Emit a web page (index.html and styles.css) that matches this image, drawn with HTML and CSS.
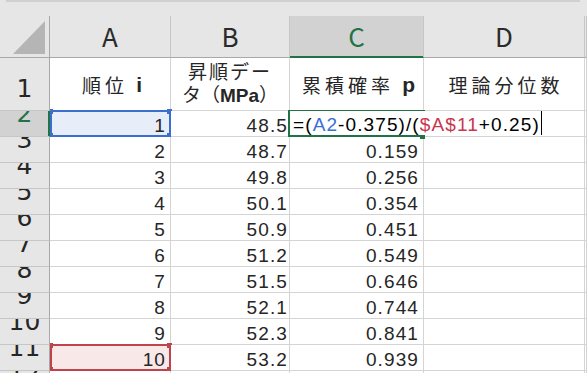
FILE: index.html
```html
<!DOCTYPE html>
<html>
<head>
    <title>Sheet</title>
    <link rel="stylesheet" href="styles.css">
</head>
<body>
    <div class="topbar"><div class="topbar-line"></div></div>

    <div class="sheet">
        <!-- column headers -->
        <div class="corner"><div class="corner-tri"></div></div>
        <div class="col-head">A</div>
        <div class="col-head">B</div>
        <div class="col-head active">C</div>
        <div class="col-head">D</div>
        <div class="col-head"></div>

        <!-- row 1: titles -->
        <div class="row-head first">1</div>
        <div class="cell title">順位 <b>i</b></div>
        <div class="cell title wrap"><span class="l1">昇順デー</span><span class="l2">タ（<b>MPa</b>）</span></div>
        <div class="cell title">累積確率 <b>p</b></div>
        <div class="cell title">理論分位数</div>
        <div class="cell"></div>

        <!-- row 2: editing -->
        <div class="row-head active"><span>2</span></div>
        <div class="cell a ref-blue">1
            <div class="ref-box blue">
                <i class="h tl"></i><i class="h tr"></i><i class="h bl"></i><i class="h br"></i>
            </div>
        </div>
        <div class="cell b">48.5</div>
        <div class="cell c editing">
            <div class="edit-box"><i class="fill-handle"></i></div>
            <div class="formula">=(<span class="f-blue">A2</span>-0.375)/(<span class="f-red">$A$11</span>+0.25)</div>
        </div>
        <div class="cell d"></div>
        <div class="cell"></div>

        <div class="row-head"><span>3</span></div>
        <div class="cell a">2</div><div class="cell b">48.7</div><div class="cell c">0.159</div><div class="cell d"></div><div class="cell"></div>

        <div class="row-head"><span>4</span></div>
        <div class="cell a">3</div><div class="cell b">49.8</div><div class="cell c">0.256</div><div class="cell d"></div><div class="cell"></div>

        <div class="row-head"><span>5</span></div>
        <div class="cell a">4</div><div class="cell b">50.1</div><div class="cell c">0.354</div><div class="cell d"></div><div class="cell"></div>

        <div class="row-head"><span>6</span></div>
        <div class="cell a">5</div><div class="cell b">50.9</div><div class="cell c">0.451</div><div class="cell d"></div><div class="cell"></div>

        <div class="row-head"><span>7</span></div>
        <div class="cell a">6</div><div class="cell b">51.2</div><div class="cell c">0.549</div><div class="cell d"></div><div class="cell"></div>

        <div class="row-head"><span>8</span></div>
        <div class="cell a">7</div><div class="cell b">51.5</div><div class="cell c">0.646</div><div class="cell d"></div><div class="cell"></div>

        <div class="row-head"><span>9</span></div>
        <div class="cell a">8</div><div class="cell b">52.1</div><div class="cell c">0.744</div><div class="cell d"></div><div class="cell"></div>

        <div class="row-head"><span>10</span></div>
        <div class="cell a">9</div><div class="cell b">52.3</div><div class="cell c">0.841</div><div class="cell d"></div><div class="cell"></div>

        <div class="row-head"><span>11</span></div>
        <div class="cell a ref-red">10
            <div class="ref-box red">
                <i class="h tl"></i><i class="h tr"></i><i class="h bl"></i><i class="h br"></i>
            </div>
        </div>
        <div class="cell b">53.2</div><div class="cell c">0.939</div><div class="cell d"></div><div class="cell"></div>

        <div class="row-head"><span>12</span></div>
        <div class="cell a"></div><div class="cell b"></div><div class="cell c"></div><div class="cell d"></div><div class="cell"></div>
    </div>
</body>
</html>
```

FILE: styles.css
```css
body {
    margin: 0;
    background-color: #ffffff;
    overflow: hidden;
    font-family: "Liberation Sans", Arial, sans-serif;
    color: #262626;
}

.topbar {
    height: 16px;
    background-color: #e6e6e6;
}

.topbar-line {
    height: 2px;
    margin: 0 7px 0 6px;
    background-color: #d0d0d0;
}

.sheet {
    display: grid;
    grid-template-columns: 50px 121px 119px 134px 161px 1fr;
    grid-template-rows: 42px 53px;
    grid-auto-rows: 26px;
}

.sheet > div {
    box-sizing: border-box;
}

/* headers */
.corner {
    background-color: #e6e6e6;
    border-right: 1px solid #a8a8a8;
    border-bottom: 1px solid #a8a8a8;
    display: flex;
    align-items: flex-end;
    justify-content: flex-end;
    padding: 0 4px 3px 0;
}

.corner-tri {
    width: 0;
    height: 0;
    border-left: 32px solid transparent;
    border-bottom: 33px solid #b5b5b5;
}

.col-head {
    background-color: #e6e6e6;
    border-right: 1px solid #c6c6c6;
    border-bottom: 1px solid #a8a8a8;
    font-family: "Noto Sans CJK JP", sans-serif;
    font-size: 26px;
    line-height: 40px;
    text-align: center;
    color: #2b2b2b;
}

.col-head.active {
    background-color: #d2d2d2;
    color: #217346;
    border-bottom-color: #217346;
    box-shadow: inset 0 -1px 0 #217346;
}

.row-head {
    background-color: #e6e6e6;
    border-right: 1px solid #a8a8a8;
    border-bottom: 1px solid #c6c6c6;
    font-family: "DejaVu Sans", sans-serif;
    font-size: 25px;
    text-align: center;
    color: #262626;
    overflow: hidden;
}

.row-head span {
    display: block;
    line-height: 26px;
    margin-top: -10px;
}

.row-head.first {
    line-height: 26px;
    padding-top: 18px;
}

.row-head.active {
    background-color: #d2d2d2;
    color: #217346;
    border-right-color: #217346;
    box-shadow: inset -1px 0 0 #217346;
}

/* cells */
.cell {
    position: relative;
    background-color: #ffffff;
    border-right: 1px solid #d4d4d4;
    border-bottom: 1px solid #d4d4d4;
    font-size: 19px;
    letter-spacing: 1.1px;
    line-height: 21px;
    padding-top: 4px;
    text-align: right;
}

.cell.a { padding-right: 4px; }
.cell.b { padding-right: 1px; }
.cell.c { padding-right: 4px; }

.title {
    font-family: "Noto Sans CJK JP", sans-serif;
    letter-spacing: 4px;
    padding: 0 0 0 4px;
    display: flex;
    align-items: center;
    justify-content: center;
    white-space: pre;
}

.title b {
    font-family: "Liberation Sans", Arial, sans-serif;
    font-size: 21px;
    letter-spacing: 0;
}

.title.wrap {
    flex-direction: column;
    line-height: 23px;
    padding: 0 0 2px 0;
}

.title.wrap .l1 { letter-spacing: 2px; }
.title.wrap .l2 { letter-spacing: 0; }

.title.wrap b {
    font-size: 19px;
}

.ref-blue { background-color: #e8eef9; }
.ref-red { background-color: #f9e8e8; }

.ref-box {
    position: absolute;
    top: -1px;
    left: 0;
    right: -1px;
    bottom: -1px;
    border: 2px solid;
}

.ref-box.blue { border-color: #3b6fcf; color: #3b6fcf; }
.ref-box.red { border-color: #c0434c; color: #c0434c; }

.h {
    position: absolute;
    width: 5px;
    height: 5px;
    background-color: currentColor;
}

.h.tl { top: -3px; left: -2px; width: 3px; }
.h.bl { bottom: -3px; left: -2px; width: 3px; }
.h.tr { top: -3px; right: -3px; }
.h.br { bottom: -3px; right: -3px; }

/* formula edit */
.editing {
    z-index: 2;
}

.edit-box {
    position: absolute;
    top: -1px;
    left: -2px;
    right: -2px;
    bottom: -1px;
    border: 2px solid #217346;
}

.fill-handle {
    position: absolute;
    right: -2px;
    bottom: -4px;
    width: 5px;
    height: 5px;
    background-color: #217346;
}

.formula {
    position: absolute;
    top: 0;
    left: 0;
    height: 24px;
    padding: 3px 1px 0 3px;
    box-sizing: border-box;
    background-color: #ffffff;
    color: #000000;
    white-space: nowrap;
    text-align: left;
    border-right: 1px solid #000000;
}

.f-blue { color: #3b6fd6; }
.f-red { color: #c8364f; }
```
